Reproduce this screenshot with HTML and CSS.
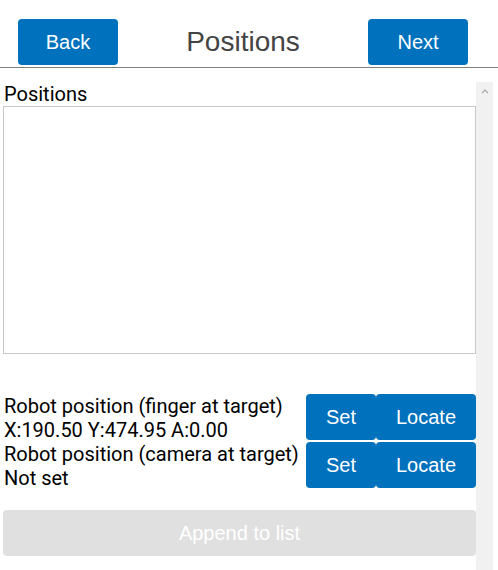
FILE: index.html
```html
<!DOCTYPE html>
<html>
<head>
<meta charset="utf-8">
<link rel="stylesheet" href="styles.css">
</head>
<body>
<div class="header">
  <button class="btn nav">Back</button>
  <div class="title">Positions</div>
  <button class="btn nav">Next</button>
</div>
<div class="main">
  <div class="content">
    <div class="label">Positions</div>
    <div class="list"></div>
    <div class="rows">
      <div class="row">
        <div class="text">Robot position (finger at target)<br>X:190.50 Y:474.95 A:0.00</div>
        <div class="actions">
          <button class="btn set">Set</button>
          <button class="btn locate">Locate</button>
        </div>
      </div>
      <div class="row">
        <div class="text">Robot position (camera at target)<br>Not set</div>
        <div class="actions">
          <button class="btn set">Set</button>
          <button class="btn locate">Locate</button>
        </div>
      </div>
    </div>
    <button class="btn append" disabled>Append to list</button>
  </div>
  <div class="scrollbar">
    <svg class="arrow" width="8" height="5" viewBox="0 0 8 5"><path d="M1 4.2 L4 1.2 L7 4.2" fill="none" stroke="#a3a3a3" stroke-width="1.2"/></svg>
  </div>
</div>
</body>
</html>
```

FILE: styles.css
```css
html, body {
  margin: 0;
  padding: 0;
  background: #ffffff;
  height: 100%;
  overflow: hidden;
}
body {
  font-family: Roboto, "Liberation Sans", sans-serif;
  color: #000;
}
.btn {
  font-family: "Liberation Sans", Arial, sans-serif;
  font-size: 20px;
  color: #ffffff;
  background: #0071bc;
  border: none;
  border-radius: 4px;
  padding: 0;
  margin: 0;
  height: 46px;
  cursor: pointer;
}
.header {
  display: flex;
  align-items: center;
  padding: 19px 30px 2px 18px;
  border-bottom: 1px solid #808080;
}
.nav {
  width: 100px;
}
.title {
  flex: 1;
  text-align: center;
  font-family: "Liberation Sans", Arial, sans-serif;
  font-size: 28px;
  color: #444444;
}
.main {
  display: flex;
  margin-top: 14px;
  height: 488px;
}
.content {
  width: 473px;
  padding-left: 3px;
  display: flex;
  flex-direction: column;
}
.label {
  font-size: 20px;
  line-height: 24px;
  padding-left: 1px;
}
.list {
  height: 246px;
  border: 1px solid #c8c8c8;
}
.rows {
  margin-top: 40px;
  display: flex;
  flex-direction: column;
}
.row {
  display: flex;
  justify-content: space-between;
  align-items: flex-start;
}
.text {
  font-size: 20px;
  line-height: 24px;
  padding-left: 1px;
  white-space: nowrap;
}
.actions {
  display: flex;
}
.set {
  width: 70px;
}
.locate {
  width: 100px;
}
.append {
  margin-top: 20px;
  width: 473px;
  background: #e0e0e0;
  color: #ffffff;
  cursor: default;
}
.scrollbar {
  width: 17px;
  background: #f1f1f1;
  display: flex;
  justify-content: center;
  align-items: flex-start;
  padding-top: 7px;
  box-sizing: border-box;
}
.arrow {
  display: block;
}
```
